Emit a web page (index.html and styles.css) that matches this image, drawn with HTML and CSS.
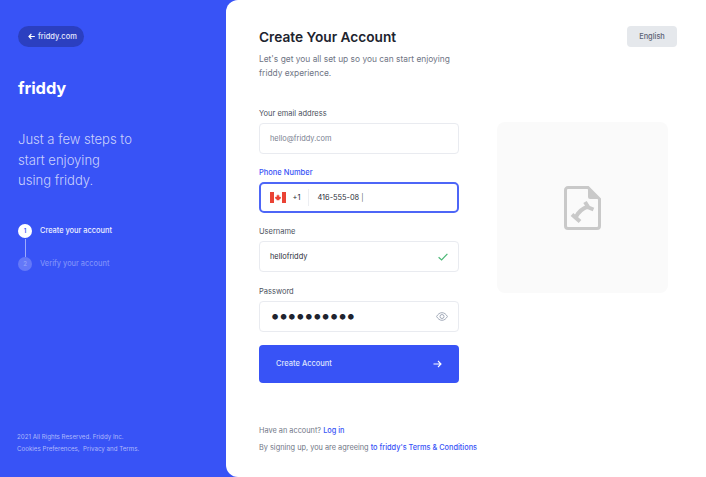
FILE: index.html
```html
<!DOCTYPE html>
<html lang="en">
<head>
    <meta charset="UTF-8">
    <meta name="viewport" content="width=device-width, initial-scale=1.0">
    <title>Create Your Account</title>
    <link rel="stylesheet" href="styles.css">
</head>
<body>
    <div class="page">
        <!-- Left panel -->
        <aside class="side">
            <a class="back" href="#">
                <svg width="7" height="7" viewBox="0 0 7 7" fill="none" stroke="#fff" stroke-width="1.2"><path d="M6.8 3.5H1M3.4 1 1 3.5 3.4 6"/></svg>
                friddy.com
            </a>
            <div class="logo">friddy</div>
            <p class="tagline">Just a few steps to<br>start enjoying<br>using friddy.</p>
            <ol class="steps">
                <li class="step active"><span class="num">1</span>Create your account</li>
                <li class="step-line"></li>
                <li class="step"><span class="num">2</span>Verify your account</li>
            </ol>
            <footer class="side-foot">
                <p>2021 All Rights Reserved. Friddy Inc.</p>
                <p>Cookies Preferences,&nbsp; Privacy and Terms.</p>
            </footer>
        </aside>

        <!-- Form -->
        <main class="main">
            <section class="form-col">
                <h1>Create Your Account</h1>
                <p class="intro">Let's get you all set up so you can start enjoying friddy experience.</p>
                <form>
                    <label class="label">Your email address</label>
                    <div class="field"><span class="placeholder">hello@friddy.com</span></div>

                    <label class="label focus">Phone Number</label>
                    <div class="field focused">
                        <svg class="flag" width="16" height="11" viewBox="0 0 16 11">
                            <rect width="16" height="11" fill="#fff"/>
                            <rect width="4" height="11" fill="#ea4335"/>
                            <rect x="12" width="4" height="11" fill="#ea4335"/>
                            <path d="M8 2.2 8.7 3.5 9.4 3.2 9.1 5 10 4.4 10.4 5 11 4.9 10.7 6 11 6.3 9.3 7.6 9.5 8.3 8.2 8.1V9H7.8V8.1L6.5 8.3 6.7 7.6 5 6.3 5.3 6 5 4.9 5.6 5 6 4.4 6.9 5 6.6 3.2 7.3 3.5Z" fill="#ea4335"/>
                        </svg>
                        <span class="code">+1</span>
                        <span class="divider"></span>
                        <span class="value">416-555-08 <span class="caret">|</span></span>
                    </div>

                    <label class="label">Username</label>
                    <div class="field between">
                        <span class="value">hellofriddy</span>
                        <svg width="10" height="8" viewBox="0 0 10 8" fill="none" stroke="#4cb877" stroke-width="1.2"><path d="M.6 4.2 3.6 7 9.4.8"/></svg>
                    </div>

                    <label class="label">Password</label>
                    <div class="field between">
                        <span class="dots">••••••••••</span>
                        <svg width="12" height="9" viewBox="0 0 12 9" fill="none" stroke="#9aa3b2" stroke-width=".9"><path d="M.6 4.5C2 2 3.8.7 6 .7s4 1.3 5.4 3.8C10 7 8.2 8.3 6 8.3S2 7 .6 4.5Z"/><circle cx="6" cy="4.5" r="2"/></svg>
                    </div>

                    <button class="submit" type="button">
                        Create Account
                        <svg width="9" height="8" viewBox="0 0 9 8" fill="none" stroke="#fff" stroke-width="1.1"><path d="M.5 4H8M5 1l3 3-3 3"/></svg>
                    </button>
                </form>
                <p class="login">Have an account? <a href="#">Log in</a></p>
                <p class="terms">By signing up, you are agreeing <a href="#">to friddy's Terms &amp; Conditions</a></p>
            </section>

            <section class="right-col">
                <button class="lang" type="button">English</button>
                <div class="picture">
                    <svg width="37" height="44" viewBox="0 0 37 44" fill="none">
                        <path d="M4 1.5H24L35.5 13V40A2.5 2.5 0 0 1 33 42.5H4A2.5 2.5 0 0 1 1.5 40V4A2.5 2.5 0 0 1 4 1.5Z" stroke="#c9c9c9" stroke-width="3"/>
                        <path d="M24 1 36 13H26A2 2 0 0 1 24 11Z" fill="#c9c9c9"/>
                        <path d="M8 28.5 16 35.5M11.5 31.5C14 26.5 18 22.5 24 20.5M21 16 24.5 21.5 29.5 23.5" stroke="#c9c9c9" stroke-width="4"/>
                    </svg>
                </div>
            </section>
        </main>
    </div>
</body>
</html>
```

FILE: styles.css
```css
* {
    box-sizing: border-box;
}
html, body {
    height: 100%;
}
body {
    margin: 0;
    font-family: Inter, "Liberation Sans", sans-serif;
    background: #3853f6;
    overflow: hidden;
}
a {
    text-decoration: none;
}
p {
    margin: 0;
}
.page {
    display: flex;
    height: 100%;
}

/* left panel */
.side {
    width: 226px;
    flex: none;
    display: flex;
    flex-direction: column;
    align-items: flex-start;
    padding: 26px 18px 22px;
    color: #fff;
}
.back {
    display: flex;
    align-items: center;
    gap: 3px;
    height: 21px;
    padding: 0 10px;
    width: 66px;
    border-radius: 11px;
    background: #2b3fc0;
    color: #e4e7fd;
    font-size: 7.5px;
    font-weight: 500;
    white-space: nowrap;
}
.back svg {
    flex: none;
}
.logo {
    margin-top: 30px;
    font-size: 16.5px;
    line-height: 22px;
    font-weight: 700;
    letter-spacing: -.1px;
}
.tagline {
    margin-top: 30px;
    font-size: 13.05px;
    line-height: 20.5px;
    font-weight: 300;
    color: #c9d0fc;
}
.steps {
    list-style: none;
    margin: 33px 0 0;
    padding: 0;
}
.step {
    display: flex;
    align-items: center;
    gap: 8px;
    height: 14px;
    font-size: 7.4px;
    font-weight: 500;
    color: #7e90fa;
}
.step.active {
    color: #eef0fe;
}
.num {
    width: 14px;
    height: 14px;
    border-radius: 50%;
    display: flex;
    align-items: center;
    justify-content: center;
    background: #6478f8;
    color: #8f9ffa;
    font-size: 6px;
    font-weight: 600;
}
.active .num {
    background: #fff;
    color: #3853f6;
}
.step-line {
    width: 1px;
    height: 18px;
    margin: 1px 0 0 7px;
    background: #9eabfb;
}
.side-foot {
    margin-top: auto;
    margin-left: -1px;
    font-size: 6.2px;
    line-height: 12px;
    color: #aeb9fb;
    white-space: nowrap;
}

/* form area */
.main {
    flex: 1;
    display: flex;
    background: #fff;
    border-radius: 12px 0 0 12px;
    padding: 26px 29px 0 33px;
}
.form-col {
    width: 200px;
    flex: none;
}
h1 {
    margin: 0;
    font-size: 13.7px;
    line-height: 22px;
    font-weight: 600;
    color: #20232e;
}
.intro {
    margin-top: 4px;
    font-size: 8.38px;
    line-height: 14px;
    color: #6f7585;
}
form {
    margin-top: 28px;
}
.label {
    display: block;
    margin-bottom: 3px;
    font-size: 7.5px;
    line-height: 12px;
    color: #4a4f5c;
}
.label.focus {
    color: #3853f6;
    font-weight: 500;
}
.field {
    display: flex;
    align-items: center;
    height: 31px;
    margin-bottom: 13.2px;
    padding: 0 10px;
    border: 1px solid #e9ebf0;
    border-radius: 4px;
    font-size: 7.4px;
}
.field.focused {
    border: 2px solid #4d66f7;
    border-radius: 5px;
    padding: 0 8.5px;
}
.field.between {
    justify-content: space-between;
}
.placeholder {
    color: #7a8090;
}
.value {
    color: #2b2e39;
}
.caret {
    font-weight: 300;
}
.flag {
    flex: none;
}
.code {
    margin-left: 7px;
    color: #2b2e39;
}
.divider {
    width: 1px;
    height: 17px;
    margin: 0 8px;
    background: #eceef2;
}
.dots {
    font-size: 18px;
    line-height: 20px;
    letter-spacing: -1.7px;
    color: #20232e;
}
.submit {
    display: flex;
    align-items: center;
    justify-content: space-between;
    width: 100%;
    height: 38px;
    padding: 0 17px;
    border: none;
    border-radius: 4px;
    background: #3853f6;
    color: #dfe3fd;
    font-family: inherit;
    font-size: 7.5px;
    font-weight: 500;
    cursor: pointer;
}
.login {
    margin-top: 42px;
    font-size: 7.35px;
    line-height: 12px;
    color: #6f7585;
}
.terms {
    margin-top: 5px;
    font-size: 7.35px;
    line-height: 12px;
    color: #6f7585;
    white-space: nowrap;
}
.login a, .terms a {
    color: #3853f6;
    font-weight: 500;
}

/* right column */
.right-col {
    width: 180px;
    margin-left: 38px;
    display: flex;
    flex-direction: column;
    align-items: flex-start;
}
.lang {
    align-self: flex-end;
    width: 50px;
    height: 21px;
    border: none;
    border-radius: 4px;
    background: #e5e8ec;
    color: #5b6274;
    font-family: inherit;
    font-size: 7.4px;
    font-weight: 500;
}
.picture {
    width: 171px;
    height: 171px;
    margin-top: 75px;
    border-radius: 8px;
    background: #fafafa;
    display: flex;
    align-items: center;
    justify-content: center;
}
```
